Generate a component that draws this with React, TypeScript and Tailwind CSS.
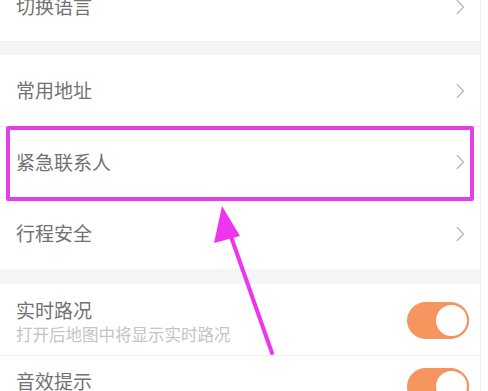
const font = { fontFamily: '"Noto Sans CJK SC", "Noto Sans", sans-serif' };

function Chevron() {
  return (
    <svg width="9" height="16" viewBox="0 0 9 16" className="shrink-0">
      <polyline points="1.2,1.5 7.5,8 1.2,14.5" fill="none" stroke="#b8b8b8" strokeWidth="1.3" strokeLinecap="round" strokeLinejoin="round" />
    </svg>
  );
}

function LinkRow({ label, className = "" }: { label: string; className?: string }) {
  return (
    <div className={`flex items-center justify-between pl-4 pr-[15px] border-b border-[#f1f1f1] ${className}`}>
      <span className="text-[19px] text-[#727272]">{label}</span>
      <Chevron />
    </div>
  );
}

function Toggle() {
  return (
    <div className="flex items-center justify-end w-[62px] h-[37px] rounded-full bg-[#f7955f]">
      <div className="w-[35px] h-[35px] rounded-full bg-white border-2 border-[#f39360]" />
    </div>
  );
}

function SwitchRow({ title, sub, className = "" }: { title: string; sub?: string; className?: string }) {
  return (
    <div className={`flex items-center justify-between pl-4 pr-[11px] border-b border-[#efefef] ${className}`}>
      <div className="flex flex-col">
        <span className="text-[19px] leading-[26px] text-[#727272]">{title}</span>
        {sub && <span className="text-[16.5px] leading-[20px] text-[#c4c4c4] mt-[1px]">{sub}</span>}
      </div>
      <Toggle />
    </div>
  );
}

export default function App() {
  return (
    <div className="relative w-[488px] h-[391px] overflow-hidden bg-white" style={font}>
      <div className="w-[481px] h-full border-r border-[#ececec] flex flex-col">
        <LinkRow label="切换语言" className="h-[70px] -mt-[28px] shrink-0" />
        <div className="h-[13px] bg-[#f4f5f7] shrink-0" />
        <LinkRow label="常用地址" className="h-[72px] shrink-0" />
        <LinkRow label="紧急联系人" className="h-[71px] shrink-0" />
        <LinkRow label="行程安全" className="h-[71px] shrink-0 border-b-0" />
        <div className="h-[15px] bg-[#f4f5f7] shrink-0" />
        <SwitchRow title="实时路况" sub="打开后地图中将显示实时路况" className="h-[72px] shrink-0 pt-[2px]" />
        <SwitchRow title="音效提示" className="h-[72px] shrink-0 items-start pt-[12px]" />
      </div>

      {/* annotation box */}
      <div className="absolute left-[6px] top-[126px] w-[468px] h-[75px] border-[4px] border-[#e63ee6] rounded-[2px]" />

      {/* annotation arrow */}
      <svg className="absolute left-0 top-0" width="488" height="391" viewBox="0 0 488 391">
        <line x1="272" y1="353" x2="228" y2="228" stroke="#ee34ee" strokeWidth="4" strokeLinecap="round" />
        <polygon points="222,206 240,236 214,243" fill="#ee34ee" />
      </svg>
    </div>
  );
}
